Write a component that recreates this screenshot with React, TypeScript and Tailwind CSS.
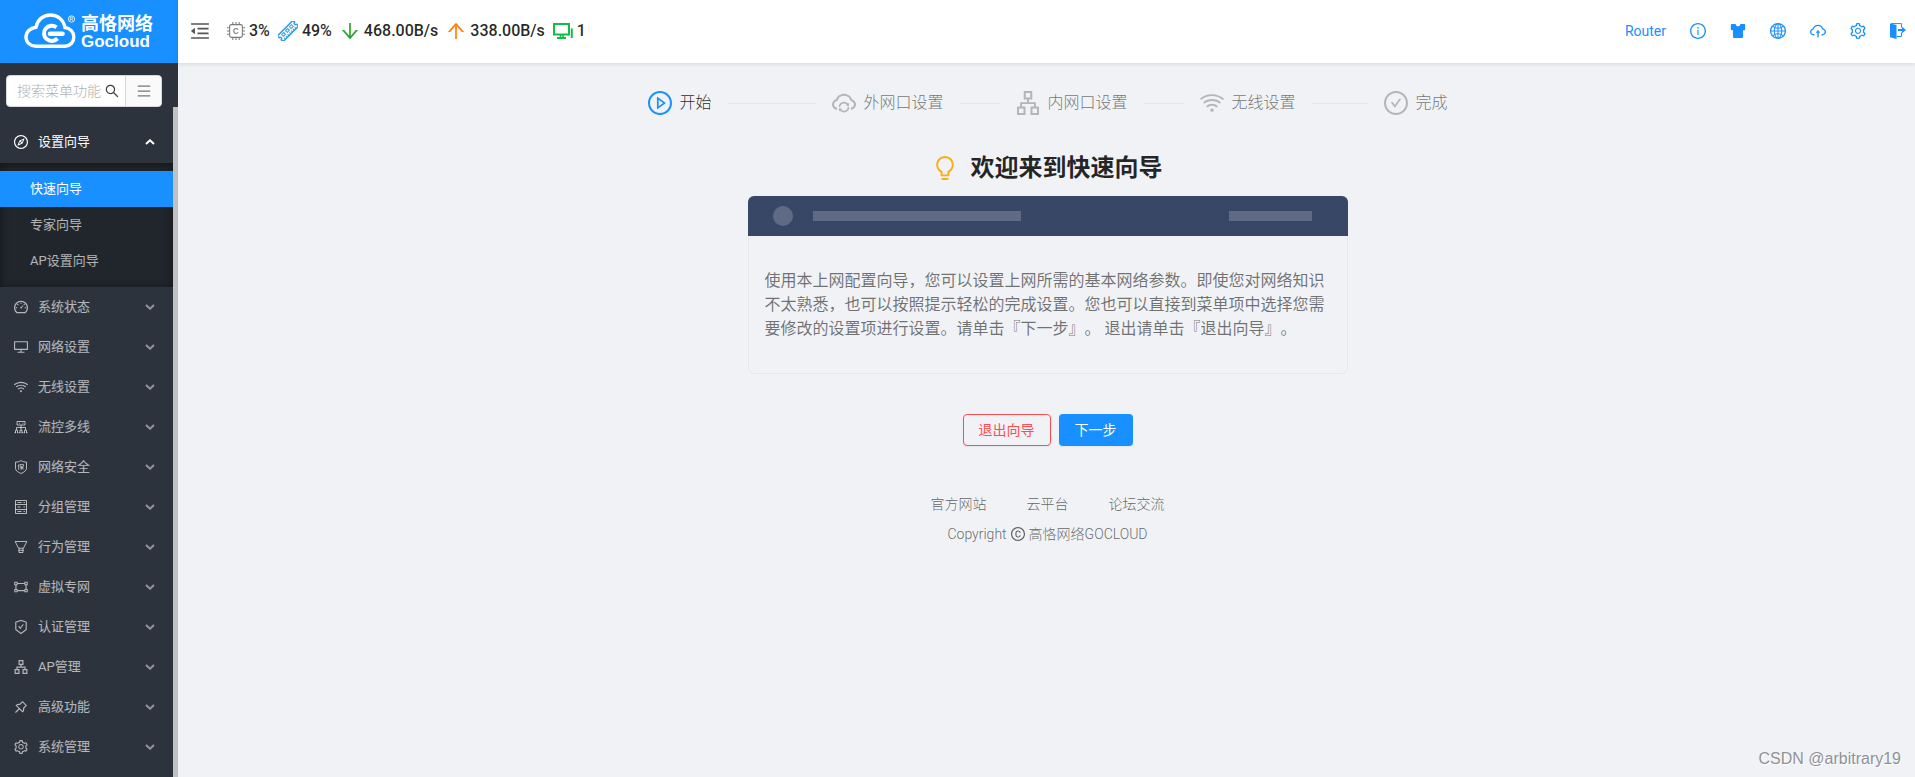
import type { ReactNode } from "react";
import type { IconType } from "react-icons";
import {
  AiFillSkin,
  AiOutlineApartment,
  AiOutlineArrowDown,
  AiOutlineArrowUp,
  AiOutlineBulb,
  AiOutlineCheckCircle,
  AiOutlineCloudSync,
  AiOutlineCloudUpload,
  AiOutlineCompass,
  AiOutlineCopyright,
  AiOutlineDashboard,
  AiOutlineDesktop,
  AiOutlineGateway,
  AiOutlineGlobal,
  AiOutlineInfoCircle,
  AiOutlineMenu,
  AiOutlineMenuFold,
  AiOutlinePlayCircle,
  AiOutlinePushpin,
  AiOutlineSafetyCertificate,
  AiOutlineSearch,
  AiOutlineSetting,
  AiOutlineWifi,
} from "react-icons/ai";

// Ant icons carry a 64 unit margin in some glyphs, trim it so they all fill their box
function Ant({ icon: Icon, size = "1em", className }: { icon: IconType; size?: number | string; className?: string }) {
  return <Icon size={size} className={className} viewBox="64 64 896 896" aria-hidden="true" />;
}

function Svg({ children, size = 14, box = 14 }: { children: ReactNode; size?: number; box?: number }) {
  return (
    <svg width={size} height={size} viewBox={`0 0 ${box} ${box}`} fill="none" stroke="currentColor" aria-hidden="true">
      {children}
    </svg>
  );
}

function FlowIcon() {
  return (
    <Svg>
      <path d="M3 1.500h8v3.500h-8zM5 3.200h1M8.500 3.200h1M7 5v5M2.500 10V7.500h9V10" />
      <path d="M1.500 12.700v-2.500h2v2.500M6 12.700v-2.500h2v2.500M10.500 12.700v-2.500h2v2.500M.5 12.700h1.500M3 12.700h1.500M5 12.700h1.500M7.500 12.700h1.500M9.500 12.700h1.500M12 12.700h1.500" />
    </Svg>
  );
}

function ShieldIcon() {
  return (
    <Svg>
      <path d="M7 .6c1.800 1.100 3.600 1.500 5.500 1.500v6.200c0 2.400-2.600 4-5.500 5.200-2.900-1.200-5.500-2.800-5.500-5.200V2.100C3.400 2.100 5.200 1.700 7 .6z" />
      <path d="M5 4.200 4 6.500M4.600 5.500v4.300M6 4.500h3.500v1.800H6zM5.700 7.700h4M7.800 6.300v3.500M7.600 7.800 6 9.500M8 7.800l1.700 1.700" strokeWidth=".8" />
    </Svg>
  );
}

function ServerIcon() {
  return (
    <Svg>
      <path d="M1.500.5h11v13h-11zM1.500 4.500h11M1.500 9.500h11" />
      <path d="M3.500 2.500h4M9.500 2.500h1.500M3.500 7h3M9.500 7h1.500M3.500 11.500h4M9.500 11.500h1.500" />
    </Svg>
  );
}

function FunnelIcon() {
  return (
    <Svg>
      <path d="M1.200 1.500h11.600L9.500 8.200H4.500zM5 8.200v4.300h4V8.200M4.500 10.300h5" />
    </Svg>
  );
}

function CpuIcon() {
  return (
    <Svg size={18} box={17}>
      <rect x="2.500" y="2.500" width="12" height="12" rx="1.500" />
      <path d="M5.500 0v2M8.500 0v2M11.500 0v2M5.500 15v2M8.500 15v2M11.500 15v2M0 5.500h2M0 8.500h2M0 11.500h2M15 5.500h2M15 8.500h2M15 11.500h2" />
      <path d="M10.500 7.300C10 6.500 9.400 6.200 8.600 6.200 7.200 6.200 6.400 7.100 6.400 8.500s.8 2.300 2.200 2.300c.8 0 1.400-.3 1.900-1.100" />
    </Svg>
  );
}

function MemoryIcon() {
  return (
    <Svg size={20} box={20}>
      <g transform="rotate(-45 10 10)">
        <path d="M-1 6h22v2.500a1.500 1.500 0 0 0 0 3V14h-22v-2.500a1.500 1.500 0 0 0 0-3z" strokeWidth="1.500" />
        <path d="M3 8h3v2.500h-3zM8.500 8h3v2.500h-3zM14 8h3v2.500h-3zM2.500 12v2M5 12v2M7.500 12v2M10 12v2M12.500 12v2M15 12v2M17.500 12v2" />
      </g>
    </Svg>
  );
}

function ClientIcon() {
  return (
    <svg width="20" height="16" viewBox="0 0 20 16" fill="none" stroke="currentColor" aria-hidden="true">
      <path d="M1 1h15v10.500H1z" strokeWidth="2" />
      <path d="M7.500 12v3M10 12v3" strokeWidth="1.500" />
      <path d="M4 15h9M18.800 5.500v9.500" strokeWidth="2" />
    </svg>
  );
}

function LogoutIcon() {
  return (
    <svg width="16" height="16" viewBox="0 0 16 16" aria-hidden="true">
      <path d="M0 .5 6.500 2v14L0 14.200z" fill="currentColor" />
      <path d="M1 .6h10.500v4M11.500 9.500v4H6.500" fill="none" stroke="currentColor" />
      <path d="M8 6h4V3.800L16 7l-4 3.200V8H8z" fill="currentColor" />
    </svg>
  );
}

function CloudLogo() {
  return (
    <svg width="53" height="37" viewBox="0 0 53 37" fill="none" stroke="white" aria-hidden="true">
      <path d="M12 33.300h29c5.500-.5 9-4.500 8.800-9.500-.2-5-4-8.600-8.800-9.300C39.500 6.500 33.500 2 26.500 2 19 2 13.300 7 12 14.200 6 15 2 19 2 24c0 5.300 4 9 10 9.300z" strokeWidth="3.400" />
      <path d="M32.500 14.300A7.800 7.600 0 1 0 33.500 25.500" strokeWidth="4" />
      <path d="M26 20.700h12.500" strokeWidth="4.600" strokeLinecap="round" />
      <circle cx="47.500" cy="6" r="3.200" strokeWidth=".8" />
      <path d="M46.300 7.900V4.200h1.500a1 1 0 0 1 0 2h-1.500M47.800 6.200l1.200 1.700" strokeWidth=".7" />
    </svg>
  );
}

function Chevron({ up = false }: { up?: boolean }) {
  return (
    <svg
      width="10"
      height="6"
      viewBox="0 0 10 6"
      fill="none"
      stroke="currentColor"
      strokeWidth="2"
      className={up ? "" : "opacity-75"}
      aria-hidden="true"
    >
      <path d={up ? "M1 5l4-3.700L9 5" : "M1 1l4 3.700L9 1"} />
    </svg>
  );
}

const SUB_MENU = ["快速向导", "专家向导", "AP设置向导"];

const MENU = [
  { label: "系统状态", icon: <Ant icon={AiOutlineDashboard} /> },
  { label: "网络设置", icon: <Ant icon={AiOutlineDesktop} /> },
  { label: "无线设置", icon: <Ant icon={AiOutlineWifi} /> },
  { label: "流控多线", icon: <FlowIcon /> },
  { label: "网络安全", icon: <ShieldIcon /> },
  { label: "分组管理", icon: <ServerIcon /> },
  { label: "行为管理", icon: <FunnelIcon /> },
  { label: "虚拟专网", icon: <Ant icon={AiOutlineGateway} /> },
  { label: "认证管理", icon: <Ant icon={AiOutlineSafetyCertificate} /> },
  { label: "AP管理", icon: <Ant icon={AiOutlineApartment} /> },
  { label: "高级功能", icon: <Ant icon={AiOutlinePushpin} /> },
  { label: "系统管理", icon: <Ant icon={AiOutlineSetting} /> },
];

const STATS = [
  { name: "CPU", value: "3%", icon: <CpuIcon />, color: "text-[#7a7a7a]" },
  { name: "内存", value: "49%", icon: <MemoryIcon />, color: "text-[#2d9fe6]" },
  { name: "下载", value: "468.00B/s", icon: <Ant icon={AiOutlineArrowDown} size={20} />, color: "text-[#2fa32f]" },
  { name: "上传", value: "338.00B/s", icon: <Ant icon={AiOutlineArrowUp} size={20} />, color: "text-[#ff7f0e]" },
  { name: "终端", value: "1", icon: <ClientIcon />, color: "text-[#0fbf45]" },
];

const ACTIONS = [
  { name: "信息", icon: <Ant icon={AiOutlineInfoCircle} /> },
  { name: "主题", icon: <Ant icon={AiFillSkin} /> },
  { name: "语言", icon: <Ant icon={AiOutlineGlobal} /> },
  { name: "升级", icon: <Ant icon={AiOutlineCloudUpload} /> },
  { name: "设置", icon: <Ant icon={AiOutlineSetting} /> },
  { name: "退出", icon: <LogoutIcon /> },
];

const STEPS = [
  { label: "开始", icon: AiOutlinePlayCircle },
  { label: "外网口设置", icon: AiOutlineCloudSync },
  { label: "内网口设置", icon: AiOutlineApartment },
  { label: "无线设置", icon: AiOutlineWifi },
  { label: "完成", icon: AiOutlineCheckCircle },
];

function Sidebar() {
  return (
    <aside className="flex w-[178px] shrink-0 flex-col overflow-hidden bg-[#2c333d]">
      <a href="#" className="flex h-[63px] shrink-0 items-center gap-1 bg-[#1890ff] pl-6 text-white">
        <CloudLogo />
        <span className="flex flex-col">
          <span className="text-lg leading-5 font-bold">高恪网络</span>
          <span className="font-['Liberation_Sans',sans-serif] text-[17px] leading-4 font-bold">Gocloud</span>
        </span>
      </a>

      <div className="flex h-11 shrink-0 items-end pl-1.5">
        <div className="flex h-8 w-[156px] overflow-hidden rounded-sm border border-[#d9d9d9] bg-white">
          <input
            aria-label="搜索菜单功能"
            placeholder="搜索菜单功能"
            className="w-[98px] pl-2.5 text-sm font-light outline-none placeholder:text-[#b0b0b0]"
          />
          <button aria-label="搜索" className="flex w-5 items-center text-[#444]">
            <Ant icon={AiOutlineSearch} size={14} />
          </button>
          <button aria-label="菜单" className="flex flex-1 items-center justify-center border-l border-[#d9d9d9] bg-[#fafafa] text-[#777]">
            <Ant icon={AiOutlineMenu} size={14} />
          </button>
        </div>
      </div>

      <div className="flex grow">
        <nav className="grow pt-[15px] text-[13px] text-white/65">
          <button className="flex h-10 w-full items-center pr-[18px] pl-3.5 text-white">
            <Ant icon={AiOutlineCompass} size={14} />
            <span className="ml-2.5 grow text-left">设置向导</span>
            <Chevron up />
          </button>
          <div className="mt-px bg-[#20262c] py-2 shadow-[inset_0_2px_8px_rgba(0,0,0,0.45)]">
            {SUB_MENU.map((label, i) => (
              <a
                key={label}
                href="#"
                className={`flex h-9 items-center pb-px pl-[30px] ${i === 0 ? "bg-[#1890ff] text-white" : ""}`}
              >
                {label}
              </a>
            ))}
          </div>
          {MENU.map((item) => (
            <button key={item.label} className="flex h-10 w-full items-center pr-[18px] pb-px pl-3.5">
              <span className="text-sm">{item.icon}</span>
              <span className="ml-2.5 grow text-left">{item.label}</span>
              <Chevron />
            </button>
          ))}
        </nav>
        <div className="w-[5px] bg-[#c1c1c1]" />
      </div>
    </aside>
  );
}

function Header() {
  return (
    <header className="flex h-[63px] shrink-0 items-center bg-white pr-[9px] pb-0.5 pl-3 shadow-[0_1px_4px_rgba(0,21,41,0.12)]">
      <button aria-label="收起菜单" className="text-[#555]">
        <Ant icon={AiOutlineMenuFold} size={20} />
      </button>
      <ul className="ml-[17px] flex items-center gap-2 text-base font-medium text-black/85">
        {STATS.map((stat) => (
          <li key={stat.name} title={stat.name} className="flex items-center gap-1">
            <span className={stat.color}>{stat.icon}</span>
            {stat.value}
          </li>
        ))}
      </ul>
      <div className="ml-auto flex items-center gap-6 text-[#1890ff]">
        <a href="#" className="text-sm">Router</a>
        {ACTIONS.map((action) => (
          <button key={action.name} aria-label={action.name} className="text-base">
            {action.icon}
          </button>
        ))}
      </div>
    </header>
  );
}

function Steps() {
  return (
    <ol className="flex w-[800px] max-w-full">
      {STEPS.map((step, i) => (
        <li
          key={step.label}
          className={`flex items-center overflow-hidden ${i < STEPS.length - 1 ? "mr-4 flex-1" : ""} ${
            i === 0 ? "text-black/85" : "text-black/55"
          }`}
        >
          <Ant icon={step.icon} size={24} className={`mr-2 shrink-0 ${i === 0 ? "text-[#1890ff]" : "text-black/25"}`} />
          <span className="text-base font-light whitespace-nowrap">{step.label}</span>
          {i < STEPS.length - 1 && <span className="ml-4 h-px grow bg-[#e8e8e8]" />}
        </li>
      ))}
    </ol>
  );
}

export default function App() {
  return (
    <div className="flex min-h-screen bg-[#f0f2f5] font-[Roboto,'Noto_Sans_CJK_SC',sans-serif]">
      <Sidebar />
      <div className="flex min-w-0 grow flex-col">
        <Header />
        <main className="flex flex-col items-center pt-7 pl-0.5">
          <Steps />

          <h1 className="mt-[37px] flex items-center gap-3.5 text-2xl font-bold text-black/85">
            <Ant icon={AiOutlineBulb} className="text-[#faad14]" />
            欢迎来到快速向导
          </h1>

          <section className="mt-3 w-[600px] max-w-full overflow-hidden rounded-md">
            <div className="flex h-10 items-center bg-[#384766] pr-9 pl-[25px]">
              <span className="size-5 rounded-full bg-white/20" />
              <span className="ml-5 h-2.5 w-52 bg-white/20" />
              <span className="ml-auto h-2.5 w-[83px] bg-white/20" />
            </div>
            <div className="rounded-b-md border border-t-0 border-[#e8e8e8] px-4 pt-[33px] pb-8 text-base text-black/55 [text-spacing-trim:space-all]">
              使用本上网配置向导，您可以设置上网所需的基本网络参数。即使您对网络知识不太熟悉，也可以按照提示轻松的完成设置。您也可以直接到菜单项中选择您需要修改的设置项进行设置。请单击『下一步』。 退出请单击『退出向导』。
            </div>
          </section>

          <div className="mt-10 flex gap-2 text-sm">
            <button className="h-8 rounded-sm border border-[#ff4d4f] px-[15px] text-[#ff4d4f] shadow-xs">退出向导</button>
            <button className="h-8 rounded-sm bg-[#1890ff] px-4 text-white shadow-xs">下一步</button>
          </div>

          <footer className="mt-12 text-sm font-light text-black/60">
            <nav className="flex justify-center gap-10">
              <a href="#">官方网站</a>
              <a href="#">云平台</a>
              <a href="#">论坛交流</a>
            </nav>
            <p className="mt-2.5 flex items-center justify-center gap-1">
              Copyright <Ant icon={AiOutlineCopyright} size={14} /> 高恪网络GOCLOUD
            </p>
          </footer>
        </main>
        <p className="mt-auto pr-3.5 pb-1.5 text-right font-['Liberation_Sans',sans-serif] text-base text-[#909296] text-shadow-[1px_1px_0_white]">
          CSDN @arbitrary19
        </p>
      </div>
    </div>
  );
}
